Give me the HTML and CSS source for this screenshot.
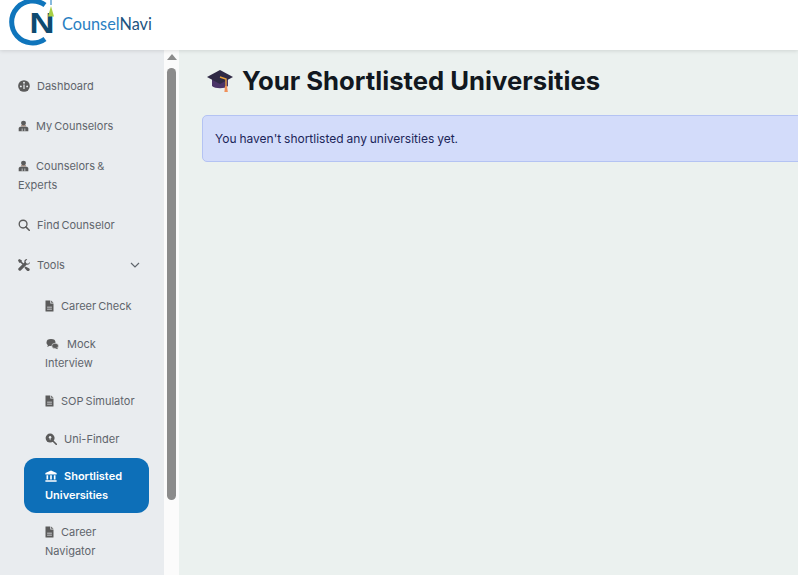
FILE: index.html
```html
<!DOCTYPE html>
<html lang="en">
  <head>
    <meta charset="UTF-8" />
    <meta name="viewport" content="width=device-width, initial-scale=1.0" />
    <title>Shortlisted Universities</title>
    <link rel="stylesheet" href="styles.css">
  </head>
  <body>
    <svg class="sprites" aria-hidden="true">
      <symbol id="i-gauge" viewBox="0 0 16 16">
        <circle cx="8" cy="8" r="7.800" fill="currentColor"/>
        <circle cx="3.800" cy="8.500" r="1.300" fill="#e9ecef"/>
        <circle cx="12.200" cy="8.500" r="1.300" fill="#e9ecef"/>
        <circle cx="8" cy="3.700" r="1.300" fill="#e9ecef"/>
        <path d="M7.200 6h1.600v6H7.200z" fill="#e9ecef"/>
      </symbol>
      <symbol id="i-person" viewBox="0 0 16 16">
        <circle cx="8" cy="3.800" r="3.600" fill="currentColor"/>
        <path d="M4.500 7h7v1.600h-7z" fill="#8a6a58"/>
        <path d="M1 15.500v-4C1 10 2.500 9 4 9h8c1.500 0 3 1 3 2.500v4z" fill="currentColor"/>
        <path d="M5.500 11.500h1v4h-1zM9.500 11.500h1v4h-1z" fill="#e9ecef"/>
      </symbol>
      <symbol id="i-search" viewBox="0 0 16 16">
        <circle cx="6.800" cy="6.800" r="5.200" fill="none" stroke="currentColor" stroke-width="1.800"/>
        <path d="M10.500 10.500L15 15" stroke="currentColor" stroke-width="2" stroke-linecap="round"/>
      </symbol>
      <symbol id="i-tools" viewBox="0 0 16 16">
        <path d="M1.500 0L0 1.500l1.500 3.500h2l3.500 3.500L8.500 7 5 3.500v-2zM12 0c-2.500 0-4 2-3.500 4.500L1 12c-1 1-1 2 0 3s2 1 3 0l7.500-7.500C14 8 16 6.500 16 4l-2.500 2.200L11 5.500 10 3l2.200-2.500zM10 10l-1.500 1.500 3.500 4c1 .8 2.500.6 3.200-.3.700-.9.600-2-.2-2.700z" fill="currentColor"/>
      </symbol>
      <symbol id="i-file" viewBox="2.500 0.500 11 15">
        <path d="M3 1h6v4h4v9.500a.5.5 0 0 1-.5.5h-9a.5.5 0 0 1-.5-.5z" fill="currentColor"/>
        <path d="M10 1l3 3h-3z" fill="currentColor"/>
        <path d="M5 9h6v1H5zM5 11.500h6v1H5z" fill="#e9ecef"/>
      </symbol>
      <symbol id="i-chat" viewBox="0 0 16 16">
        <ellipse cx="6" cy="6" rx="6" ry="4.600" fill="currentColor"/>
        <path d="M2 9l-1 3 4-2z" fill="currentColor"/>
        <ellipse cx="11.500" cy="10.500" rx="4.500" ry="3.500" fill="currentColor" stroke="#e9ecef" stroke-width=".8"/>
        <path d="M14 13l1.500 2-4-1.500z" fill="currentColor"/>
      </symbol>
      <symbol id="i-lens" viewBox="0 0 16 16">
        <circle cx="6.800" cy="6.800" r="6" fill="currentColor"/>
        <circle cx="6.800" cy="5.500" r="1.600" fill="#e9ecef"/>
        <path d="M5.800 7h2L6.800 10z" fill="#e9ecef"/>
        <path d="M11 11l4 4" stroke="currentColor" stroke-width="2.200" stroke-linecap="round"/>
      </symbol>
      <symbol id="i-bank" viewBox="0 0 16 16">
        <path d="M8 .5l7.500 3.500v2H.5V4z" fill="currentColor"/>
        <path d="M2 7h2.200v5.500H2zM6.900 7h2.200v5.500H6.900zM11.800 7H14v5.500h-2.200zM.5 13.500h15v2H.5z" fill="currentColor"/>
      </symbol>
    </svg>

    <header class="topbar">
      <svg class="logo-mark" viewBox="0 0 54 50" aria-hidden="true">
        <path d="M43 5A21 21 0 1 0 43 39" fill="none" stroke="#0f75bc" stroke-width="5"/>
        <text x="27.500" y="33" class="logo-n" textLength="25" lengthAdjust="spacingAndGlyphs">N</text>
        <path d="M49 6l3 10.500h-6z" fill="#a8cf45"/>
        <path d="M49 0v5" stroke="#0f75bc" stroke-width="1"/>
      </svg>
      <div class="brand"><span class="brand-a">Counsel</span><span class="brand-b">Navi</span></div>
    </header>

    <div class="layout">
      <nav class="sidebar">
        <a class="nav-item"><svg class="icon"><use href="#i-gauge"/></svg>Dashboard</a>
        <a class="nav-item"><svg class="icon icon-person"><use href="#i-person"/></svg>My Counselors</a>
        <a class="nav-item"><svg class="icon icon-person"><use href="#i-person"/></svg>Counselors &amp; Experts</a>
        <a class="nav-item"><svg class="icon"><use href="#i-search"/></svg>Find Counselor</a>
        <a class="nav-item nav-toggle">
          <span><svg class="icon"><use href="#i-tools"/></svg>Tools</span>
          <svg class="chevron" viewBox="0 0 10 6"><path d="M1 1l4 4 4-4" fill="none" stroke="currentColor" stroke-width="1.200"/></svg>
        </a>
        <div class="subnav">
          <a class="sub-item"><svg class="icon icon-file"><use href="#i-file"/></svg>Career Check</a>
          <a class="sub-item"><svg class="icon icon-wide"><use href="#i-chat"/></svg>Mock Interview</a>
          <a class="sub-item"><svg class="icon icon-file"><use href="#i-file"/></svg>SOP Simulator</a>
          <a class="sub-item"><svg class="icon"><use href="#i-lens"/></svg>Uni-Finder</a>
          <a class="sub-item active"><svg class="icon"><use href="#i-bank"/></svg>Shortlisted Universities</a>
          <a class="sub-item"><svg class="icon icon-file"><use href="#i-file"/></svg>Career Navigator</a>
        </div>
      </nav>
      <div class="scrollbar">
        <div class="scroll-arrow"></div>
        <div class="scroll-thumb"></div>
      </div>
      <main class="content">
        <h1 class="page-title">
          <svg class="cap" viewBox="0 0 28 26" aria-hidden="true">
            <path d="M6 11v7c3 3 13 3 16 0v-7z" fill="#4a3468"/>
            <path d="M14 2L1 9l13 7 13-7z" fill="#2f2a45"/>
            <path d="M14 9l6 2v8" fill="none" stroke="#e9a13b" stroke-width="1.400"/>
            <path d="M19 18h2l.8 6h-3.400z" fill="#f0905a"/>
          </svg>
          Your Shortlisted Universities
        </h1>
        <div class="alert">You haven't shortlisted any universities yet.</div>
      </main>
    </div>
  </body>
</html>
```

FILE: styles.css
```css
* {
  margin: 0;
  padding: 0;
  box-sizing: border-box;
}

body,
html {
  height: 100%;
  overflow: hidden;
  font-family: Inter, "Liberation Sans", sans-serif;
}

.sprites {
  display: none;
}

.topbar {
  height: 50px;
  background-color: #fff;
  display: flex;
  align-items: center;
  box-shadow: 0 1px 4px rgba(0, 0, 0, 0.12);
  position: relative;
}

.logo-mark {
  width: 54px;
  height: 50px;
  margin-left: 2px;
  flex: none;
}

.logo-n {
  font-family: "Liberation Sans", sans-serif;
  font-weight: 700;
  font-size: 29px;
  fill: #0e4a70;
}

.brand {
  font-family: Lato, sans-serif;
  font-size: 16.300px;
  margin-left: 6px;
  margin-top: -3px;
}

.brand-a {
  color: #2a80c2;
}

.brand-b {
  color: #1c5480;
}

.layout {
  display: flex;
  height: 525px;
}

.sidebar {
  width: 164px;
  flex: none;
  background-color: #e9ecef;
  padding-top: 16px;
  overflow: hidden;
  font-size: 11px;
  line-height: 19px;
  word-spacing: -1px;
  color: #5f656c;
}

.nav-item {
  display: block;
  padding: 10.500px 24px 10.500px 18px;
}

.nav-toggle {
  display: flex;
  justify-content: space-between;
  align-items: center;
}

.chevron {
  width: 10px;
  height: 6px;
}

.icon {
  width: 12px;
  height: 12px;
  margin-right: 7px;
  vertical-align: -2px;
  color: #5b5b5b;
}

.icon-person {
  width: 11px;
}

.icon-wide {
  width: 15px;
}

.icon-file {
  width: 9px;
}

.subnav {
  margin-left: 24px;
  margin-top: 2px;
  width: 125px;
}

.sub-item {
  display: block;
  padding: 9.500px 10px 9.500px 21px;
}

.sub-item.active {
  background-color: #0d6fb8;
  color: #fff;
  font-weight: 600;
  border-radius: 12px;
  padding: 8.500px 21px;
}

.sub-item.active .icon {
  color: #fff;
}

.scrollbar {
  width: 15px;
  flex: none;
  background-color: #fbfbfb;
  display: flex;
  flex-direction: column;
  align-items: center;
}

.scroll-arrow {
  width: 0;
  height: 0;
  margin-top: 4px;
  border-left: 5px solid transparent;
  border-right: 5px solid transparent;
  border-bottom: 6px solid #8b8b8b;
}

.scroll-thumb {
  width: 9px;
  height: 432px;
  margin-top: 8px;
  background-color: #8b8b8b;
  border-radius: 5px;
}

.content {
  flex: 1;
  background-color: #ebf1ef;
  padding: 14px 0 0 23px;
  overflow: hidden;
}

.page-title {
  display: flex;
  align-items: center;
  gap: 8px;
  font-size: 25.700px;
  font-weight: 700;
  line-height: 34px;
  color: #111820;
  white-space: nowrap;
  margin-left: 4px;
}

.cap {
  width: 28px;
  height: 26px;
  flex: none;
}

.alert {
  margin-top: 17px;
  width: 640px;
  height: 47px;
  background-color: #d3dcfa;
  border: 1px solid #b4c3f3;
  border-radius: 5px;
  padding: 13px 12px;
  font-size: 12px;
  line-height: 19px;
  word-spacing: -0.500px;
  color: #1b2559;
}
```
